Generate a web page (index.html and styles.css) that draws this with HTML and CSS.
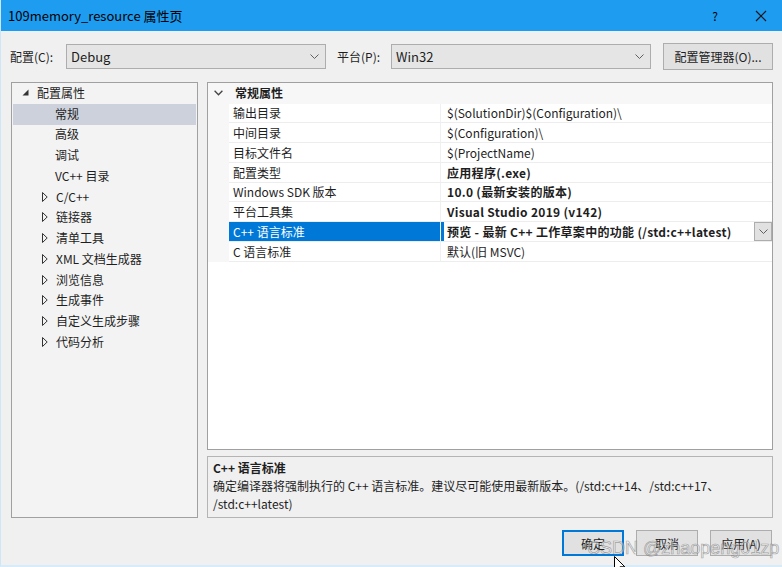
FILE: index.html
```html
<!DOCTYPE html>
<html lang="zh-CN">
<head>
    <meta charset="UTF-8">
    <title>109memory_resource 属性页</title>
    <link rel="stylesheet" href="styles.css">
</head>
<body>

<div class="window">
    <div class="titlebar">
        <span class="title">109memory_resource 属性页</span>
        <span class="help">?</span>
        <span class="close">
            <svg width="12" height="12" viewBox="0 0 12 12"><path d="M1 1L11 11M11 1L1 11" stroke="#111" stroke-width="1.1" fill="none"/></svg>
        </span>
    </div>

    <div class="toolbar">
        <span class="label config-label">配置(C):</span>
        <div class="combo">
            <span>Debug</span>
            <svg class="chev" width="9" height="5" viewBox="0 0 9 5"><path d="M0.5 0.5L4.5 4.5L8.5 0.5" stroke="#606060" fill="none"/></svg>
        </div>
        <span class="label platform-label">平台(P):</span>
        <div class="combo">
            <span>Win32</span>
            <svg class="chev" width="9" height="5" viewBox="0 0 9 5"><path d="M0.5 0.5L4.5 4.5L8.5 0.5" stroke="#606060" fill="none"/></svg>
        </div>
        <div class="button manager">配置管理器(O)...</div>
    </div>

    <div class="main">
        <div class="tree">
            <div class="node root">
                <svg class="exp" width="7" height="7" viewBox="0 0 7 7"><path d="M6.5 0.5V6.5H0.5Z" fill="#333"/></svg>
                <span>配置属性</span>
            </div>
            <div class="node leaf selected"><span>常规</span></div>
            <div class="node leaf"><span>高级</span></div>
            <div class="node leaf"><span>调试</span></div>
            <div class="node leaf"><span>VC++ 目录</span></div>
            <div class="node child"><svg class="exp" width="6" height="10" viewBox="0 0 6 10"><path d="M0.5 0.5L5.2 5L0.5 9.5Z" stroke="#333" fill="none"/></svg><span>C/C++</span></div>
            <div class="node child"><svg class="exp" width="6" height="10" viewBox="0 0 6 10"><path d="M0.5 0.5L5.2 5L0.5 9.5Z" stroke="#333" fill="none"/></svg><span>链接器</span></div>
            <div class="node child"><svg class="exp" width="6" height="10" viewBox="0 0 6 10"><path d="M0.5 0.5L5.2 5L0.5 9.5Z" stroke="#333" fill="none"/></svg><span>清单工具</span></div>
            <div class="node child"><svg class="exp" width="6" height="10" viewBox="0 0 6 10"><path d="M0.5 0.5L5.2 5L0.5 9.5Z" stroke="#333" fill="none"/></svg><span>XML 文档生成器</span></div>
            <div class="node child"><svg class="exp" width="6" height="10" viewBox="0 0 6 10"><path d="M0.5 0.5L5.2 5L0.5 9.5Z" stroke="#333" fill="none"/></svg><span>浏览信息</span></div>
            <div class="node child"><svg class="exp" width="6" height="10" viewBox="0 0 6 10"><path d="M0.5 0.5L5.2 5L0.5 9.5Z" stroke="#333" fill="none"/></svg><span>生成事件</span></div>
            <div class="node child"><svg class="exp" width="6" height="10" viewBox="0 0 6 10"><path d="M0.5 0.5L5.2 5L0.5 9.5Z" stroke="#333" fill="none"/></svg><span>自定义生成步骤</span></div>
            <div class="node child"><svg class="exp" width="6" height="10" viewBox="0 0 6 10"><path d="M0.5 0.5L5.2 5L0.5 9.5Z" stroke="#333" fill="none"/></svg><span>代码分析</span></div>
        </div>

        <div class="right">
            <div class="grid">
                <div class="group">
                    <svg class="group-chev" width="9" height="6" viewBox="0 0 9 6"><path d="M0.6 0.8L4.5 4.8L8.4 0.8" stroke="#444" stroke-width="1.3" fill="none"/></svg>
                    <span>常规属性</span>
                </div>
                <div class="row"><div class="margin"></div><div class="name">输出目录</div><div class="value">$(SolutionDir)$(Configuration)\</div></div>
                <div class="row"><div class="margin"></div><div class="name">中间目录</div><div class="value">$(Configuration)\</div></div>
                <div class="row"><div class="margin"></div><div class="name">目标文件名</div><div class="value">$(ProjectName)</div></div>
                <div class="row"><div class="margin"></div><div class="name">配置类型</div><div class="value bold">应用程序(.exe)</div></div>
                <div class="row"><div class="margin"></div><div class="name">Windows SDK 版本</div><div class="value bold">10.0 (最新安装的版本)</div></div>
                <div class="row"><div class="margin"></div><div class="name">平台工具集</div><div class="value bold">Visual Studio 2019 (v142)</div></div>
                <div class="row active"><div class="margin"></div><div class="name">C++ 语言标准</div><div class="value bold"><span>预览 - 最新 C++ 工作草案中的功能 (/std:c++latest)</span>
                    <div class="drop"><svg width="9" height="5" viewBox="0 0 9 5"><path d="M0.5 0.5L4.5 4.5L8.5 0.5" stroke="#606060" fill="none"/></svg></div></div></div>
                <div class="row"><div class="margin"></div><div class="name">C 语言标准</div><div class="value">默认(旧 MSVC)</div></div>
            </div>
            <div class="desc">
                <div class="desc-title">C++ 语言标准</div>
                <div class="desc-text">确定编译器将强制执行的 C++ 语言标准。建议尽可能使用最新版本。(/std:c++14、/std:c++17、<br>/std:c++latest)</div>
            </div>
        </div>
    </div>

    <div class="footer">
        <div class="button default">确定</div>
        <div class="button">取消</div>
        <div class="button">应用(A)</div>
    </div>

    <div class="watermark">CSDN @zhaopeng01zp</div>
    <svg class="cursor" width="12" height="18" viewBox="0 0 12 18"><path d="M0.5 0.5V15L4 11.6L6.6 17.2L8.6 16.3L6 10.8H10.8Z" fill="#fff" stroke="#000"/></svg>
</div>

</body>
</html>
```

FILE: styles.css
```css
body {
    margin: 0;
    width: 782px;
    height: 567px;
    overflow: hidden;
    background-color: #f0f0f0;
    font-family: "Noto Sans CJK SC", sans-serif;
    font-size: 12px;
    color: #1e1e1e;
}
.window {
    position: relative;
    width: 782px;
    height: 567px;
    box-sizing: border-box;
    border-left: 1px solid #cfe6f8;
    border-bottom: 2px solid #d7ecfb;
    background-color: #f0f0f0;
}
.titlebar {
    height: 31px;
    background-color: #1e9cf0;
    display: flex;
    align-items: center;
    color: #000;
}
.title {
    font-size: 13px;
    margin-left: 7px;
    flex: 1;
}
.help {
    font-size: 12px;
    margin-right: 37px;
}
.close {
    display: flex;
    margin-right: 15px;
}
.toolbar {
    display: flex;
    align-items: center;
    height: 27px;
    margin-top: 12px;
    padding-left: 9px;
}
.label {
    display: inline-block;
}
.config-label {
    width: 56px;
}
.platform-label {
    width: 54px;
}
.combo {
    width: 260px;
    height: 25px;
    box-sizing: border-box;
    border: 1px solid #adadad;
    background-color: #e5e5e5;
    display: flex;
    align-items: center;
    justify-content: space-between;
    padding: 0 6px 0 4px;
    margin-right: 11px;
    font-size: 13px;
}
.button {
    height: 26px;
    box-sizing: border-box;
    border: 1px solid #adadad;
    background-color: #e1e1e1;
    display: flex;
    align-items: center;
    justify-content: center;
}
.manager {
    width: 110px;
    height: 27px;
    margin-left: 1px;
}
.main {
    display: flex;
    margin-top: 12px;
    padding-left: 10px;
    height: 436px;
}
.tree {
    width: 187px;
    box-sizing: border-box;
    border: 1px solid #a0a0a0;
    background-color: #f3f3f3;
}
.node {
    height: 20.75px;
    display: flex;
    align-items: center;
    margin: 0 1px;
}
.node span {
    margin-top: -2px;
}
.node .exp {
    margin-top: -1px;
}
.node.root {
    padding-left: 9px;
}
.node.root .exp {
    margin-right: 8px;
}
.node.leaf {
    padding-left: 42px;
}
.node.child {
    padding-left: 29px;
}
.node.child .exp {
    margin-right: 8px;
}
.node.selected {
    background-color: #ccd1db;
}
.right {
    width: 566px;
    margin-left: 9px;
    display: flex;
    flex-direction: column;
}
.grid {
    height: 369px;
    box-sizing: border-box;
    border: 1px solid #a0a0a0;
    background-color: #fff;
}
.group {
    height: 20.5px;
    background-color: #f7f7f7;
    display: flex;
    align-items: center;
    font-weight: bold;
}
.group span {
    margin-top: -1px;
}
.group-chev {
    margin: 0 12px 0 6px;
}
.row {
    display: flex;
    height: 19.75px;
}
.margin {
    width: 21px;
    background-color: #f7f7f7;
}
.name, .value {
    display: flex;
    align-items: center;
    box-sizing: border-box;
    border-bottom: 1px solid #ededed;
}
.name {
    width: 212px;
    padding-left: 4px;
    border-right: 1px solid #f0f0f0;
}
.value {
    flex: 1;
    padding-left: 6px;
}
.bold {
    font-weight: bold;
    letter-spacing: 0.3px;
}
.row.active .name {
    background-color: #0078d7;
    color: #fff;
}
.row.active .value {
    box-shadow: inset 3px 0 #0078d7;
    justify-content: space-between;
    padding-right: 0;
}
.drop {
    width: 18px;
    height: 19px;
    box-sizing: border-box;
    border: 1px solid #adadad;
    background-color: #e1e1e1;
    display: flex;
    align-items: center;
    justify-content: center;
    letter-spacing: 0;
}
.desc {
    margin-top: 6px;
    height: 62px;
    box-sizing: border-box;
    border: 1px solid #b4b4b4;
    background-color: #f0f0f0;
    padding: 1px 5px;
    line-height: 19px;
}
.desc-title {
    font-weight: bold;
}
.desc-text {
    line-height: 18px;
}
.footer {
    display: flex;
    justify-content: flex-end;
    gap: 12px;
    margin-top: 12px;
    padding-right: 10px;
}
.footer .button {
    width: 62px;
}
.button.default {
    border: 2px solid #0078d7;
}
.watermark {
    position: absolute;
    left: 586px;
    top: 537px;
    white-space: nowrap;
    font-family: "Liberation Sans", sans-serif;
    font-size: 18px;
    line-height: 22px;
    color: rgba(255, 255, 255, 0.45);
    -webkit-text-stroke: 0.7px rgba(110, 110, 110, 0.6);
}
.cursor {
    position: absolute;
    left: 613px;
    top: 556px;
}
```
